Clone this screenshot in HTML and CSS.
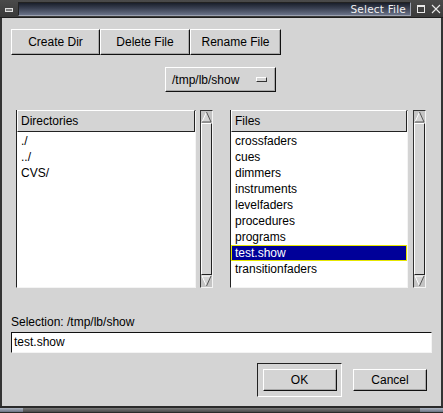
FILE: index.html
```html
<!DOCTYPE html>
<html>
<head>
<meta charset="utf-8">
<link rel="stylesheet" href="styles.css">
</head>
<body>
<div class="win">
  <div class="titlebar">
    <div class="tb-min"><span></span></div>
    <div class="tb-bar"><span class="tb-title">Select File</span></div>
    <div class="tb-max"><span></span></div>
    <div class="tb-close">
      <svg width="10" height="10" viewBox="0 0 10 10"><path d="M1 1 L9 9 M9 1 L1 9" stroke="#e8e8e8" stroke-width="1.1" fill="none"/></svg>
    </div>
  </div>
  <div class="body">
    <div class="toolbar">
      <div class="btn w89">Create Dir</div>
      <div class="btn w90">Delete File</div>
      <div class="btn w91">Rename File</div>
    </div>
    <div class="optrow">
      <div class="optmenu"><span>/tmp/lb/show</span><span class="ind"></span></div>
    </div>
    <div class="lists">
      <div class="group g-dir">
        <div class="listbox lb-dir">
          <div class="lhead">Directories</div>
          <div class="litems">
            <div class="item">./</div>
            <div class="item">../</div>
            <div class="item">CVS/</div>
          </div>
        </div>
        <div class="sb">
          <svg class="arr" width="11" height="12" viewBox="0 0 11 12"><polygon points="5.5,1 10,11 1,11" fill="#d4d4d4"/><path d="M1 11 L5.5 1" stroke="#fff" fill="none"/><path d="M5.5 1 L10 11 L1 11" stroke="#555" fill="none"/></svg>
          <div class="slider"></div>
          <svg class="arr" width="11" height="12" viewBox="0 0 11 12"><polygon points="1,1 10,1 5.5,11" fill="#d4d4d4"/><path d="M5.5 11 L1 1 L10 1" stroke="#fff" fill="none"/><path d="M10 1 L5.5 11" stroke="#555" fill="none"/></svg>
        </div>
      </div>
      <div class="group g-files">
        <div class="listbox lb-files">
          <div class="lhead">Files</div>
          <div class="litems">
            <div class="item">crossfaders</div>
            <div class="item">cues</div>
            <div class="item">dimmers</div>
            <div class="item">instruments</div>
            <div class="item">levelfaders</div>
            <div class="item">procedures</div>
            <div class="item">programs</div>
            <div class="item sel">test.show</div>
            <div class="item">transitionfaders</div>
          </div>
        </div>
        <div class="sb">
          <svg class="arr" width="11" height="12" viewBox="0 0 11 12"><polygon points="5.5,1 10,11 1,11" fill="#d4d4d4"/><path d="M1 11 L5.5 1" stroke="#fff" fill="none"/><path d="M5.5 1 L10 11 L1 11" stroke="#555" fill="none"/></svg>
          <div class="slider"></div>
          <svg class="arr" width="11" height="12" viewBox="0 0 11 12"><polygon points="1,1 10,1 5.5,11" fill="#d4d4d4"/><path d="M5.5 11 L1 1 L10 1" stroke="#fff" fill="none"/><path d="M10 1 L5.5 11" stroke="#555" fill="none"/></svg>
        </div>
      </div>
    </div>
    <div class="sel-label">Selection: /tmp/lb/show</div>
    <div class="entry">test.show</div>
    <div class="actions">
      <div class="default-frame"><div class="btn abtn">OK</div></div>
      <div class="btn abtn cancel">Cancel</div>
    </div>
  </div>
  <div class="bottombar">
    <div class="grip"></div>
    <div class="bmid"></div>
    <div class="grip"></div>
  </div>
</div>
</body>
</html>
```
FILE: styles.css
```css
* { box-sizing: border-box; }
html, body { margin: 0; padding: 0; }
body {
  width: 443px;
  height: 413px;
  overflow: hidden;
  background: #d4d4d4;
  font-family: "Liberation Sans", Arial, sans-serif;
  font-size: 12px;
  color: #000;
}
.win {
  width: 443px;
  height: 413px;
  display: flex;
  flex-direction: column;
  background: #d4d4d4;
}
.titlebar {
  height: 18px;
  display: flex;
  align-items: center;
  background: linear-gradient(#4a4a4a, #3a3a3a);
  border-bottom: 1px solid #1e1e1e;
  padding: 0 0 0 0;
}
.tb-min {
  width: 18px;
  height: 18px;
  display: flex;
  align-items: center;
  justify-content: center;
}
.tb-min span {
  display: block;
  width: 8px;
  height: 4px;
  border: 1px solid #e0e0e0;
  background: #7a7a7a;
  margin-top: 3px;
}
.tb-bar {
  flex: 0 0 393px;
  height: 14px;
  margin-top: 1px;
  background: linear-gradient(#1a1f2b, #3a4152 45%, #6a7288);
  border-bottom: 1px solid #9aa0ae;
  border-right: 1px solid #9aa0ae;
  border-top: 1px solid #222;
  border-left: 1px solid #222;
  display: flex;
  align-items: center;
  justify-content: flex-end;
  padding-right: 4px;
}
.tb-title {
  font-family: "DejaVu Sans", sans-serif;
  font-size: 10.5px;
  color: #f0f0f0;
  letter-spacing: 0.2px;
}
.tb-max {
  width: 16px;
  height: 18px;
  display: flex;
  align-items: center;
  justify-content: center;
  margin-left: 2px;
}
.tb-max span {
  display: block;
  width: 8px;
  height: 8px;
  border: 1px solid #e8e8e8;
  border-top-width: 2px;
}
.tb-close {
  width: 14px;
  height: 18px;
  display: flex;
  align-items: center;
  justify-content: center;
}
.body {
  flex: 1;
  border-left: 2px solid #333;
  border-right: 2px solid #333;
  display: flex;
  flex-direction: column;
}
.btn {
  display: flex;
  align-items: center;
  justify-content: center;
  background: #d4d4d4;
  border-top: 1px solid #fff;
  border-left: 1px solid #fff;
  border-right: 1px solid #111;
  border-bottom: 1px solid #111;
  box-shadow: inset -1px -1px 0 #a8a8a8;
}
.toolbar {
  display: flex;
  margin: 11px 0 0 9px;
  height: 26px;
}
.toolbar .btn { height: 26px; }
.w89 { width: 89px; }
.w90 { width: 90px; }
.w91 { width: 91px; }
.optrow {
  display: flex;
  margin: 12px 0 0 163px;
}
.optmenu {
  width: 111px;
  height: 25px;
  display: flex;
  align-items: center;
  justify-content: space-between;
  padding: 0 8px 0 6px;
  border-top: 1px solid #fff;
  border-left: 1px solid #fff;
  border-right: 1px solid #111;
  border-bottom: 1px solid #111;
  box-shadow: inset -1px -1px 0 #a8a8a8;
}
.ind {
  display: block;
  width: 11px;
  height: 5px;
  border-top: 1px solid #fff;
  border-left: 1px solid #fff;
  border-right: 1px solid #333;
  border-bottom: 1px solid #333;
}
.lists {
  display: flex;
  margin: 18px 0 0 14px;
  height: 178px;
}
.group { display: flex; height: 178px; }
.g-files { margin-left: 17px; }
.listbox {
  display: flex;
  flex-direction: column;
  border-top: 1px solid #222;
  border-left: 1px solid #222;
  border-right: 1px solid #f4f4f4;
  border-bottom: 1px solid #f4f4f4;
  background: #fff;
}
.lb-dir { width: 180px; }
.lb-files { width: 178px; }
.lhead {
  height: 22px;
  display: flex;
  align-items: center;
  padding-left: 3px;
  background: #d4d4d4;
  border-top: 1px solid #fff;
  border-left: 1px solid #fff;
  border-right: 1px solid #222;
  border-bottom: 1px solid #222;
  margin-top: -1px;
}
.litems {
  flex: 1;
  background: #fff;
  padding-top: 1px;
}
.item {
  height: 16px;
  line-height: 16px;
  padding-left: 4px;
  white-space: nowrap;
}
.item.sel {
  background: #000099;
  color: #fff;
  outline: 1px solid #e6e600;
  outline-offset: -1px;
  padding-left: 3px;
  margin-left: 0;
  line-height: 14px;
  border-left: 1px solid #e6e600;
  border-top: 1px solid #e6e600;
  border-bottom: 1px solid #e6e600;
  border-right: 1px solid #e6e600;
}
.sb {
  width: 13px;
  height: 178px;
  margin-left: 4px;
  display: flex;
  flex-direction: column;
  align-items: center;
  background: #c4c4c4;
  border-top: 1px solid #333;
  border-left: 1px solid #333;
  border-right: 1px solid #f4f4f4;
  border-bottom: 1px solid #f4f4f4;
}
.g-files .sb { margin-left: 5px; }
.arr { display: block; flex: 0 0 12px; }
.slider {
  flex: 1;
  width: 11px;
  background: #d4d4d4;
  border-top: 1px solid #fff;
  border-left: 1px solid #fff;
  border-right: 1px solid #222;
  border-bottom: 1px solid #222;
}
.sel-label {
  margin: 27px 0 0 9px;
  height: 14px;
  line-height: 14px;
}
.entry {
  margin: 3px 0 0 9px;
  width: 421px;
  height: 21px;
  background: #fff;
  border-top: 1px solid #111;
  border-left: 1px solid #111;
  border-right: 1px solid #f4f4f4;
  border-bottom: 1px solid #f4f4f4;
  line-height: 19px;
  padding-left: 2px;
}
.actions {
  display: flex;
  align-items: center;
  margin: 10px 0 0 255px;
  height: 34px;
}
.default-frame {
  width: 85px;
  height: 34px;
  display: flex;
  align-items: center;
  justify-content: center;
  border-top: 1px solid #222;
  border-left: 1px solid #222;
  border-right: 1px solid #fff;
  border-bottom: 1px solid #fff;
}
.abtn {
  width: 74px;
  height: 22px;
}
.cancel { margin-left: 11px; }
.bottombar {
  height: 7px;
  display: flex;
  background: #2a2a2a;
  padding: 2px 0 1px 0;
}
.grip {
  flex: 0 0 23px;
  background: linear-gradient(#b0b8c4, #6a7284);
}
.bmid {
  flex: 1;
  background: linear-gradient(#7a7a7a, #4a4a4a);
  margin: 0 0;
}
```
